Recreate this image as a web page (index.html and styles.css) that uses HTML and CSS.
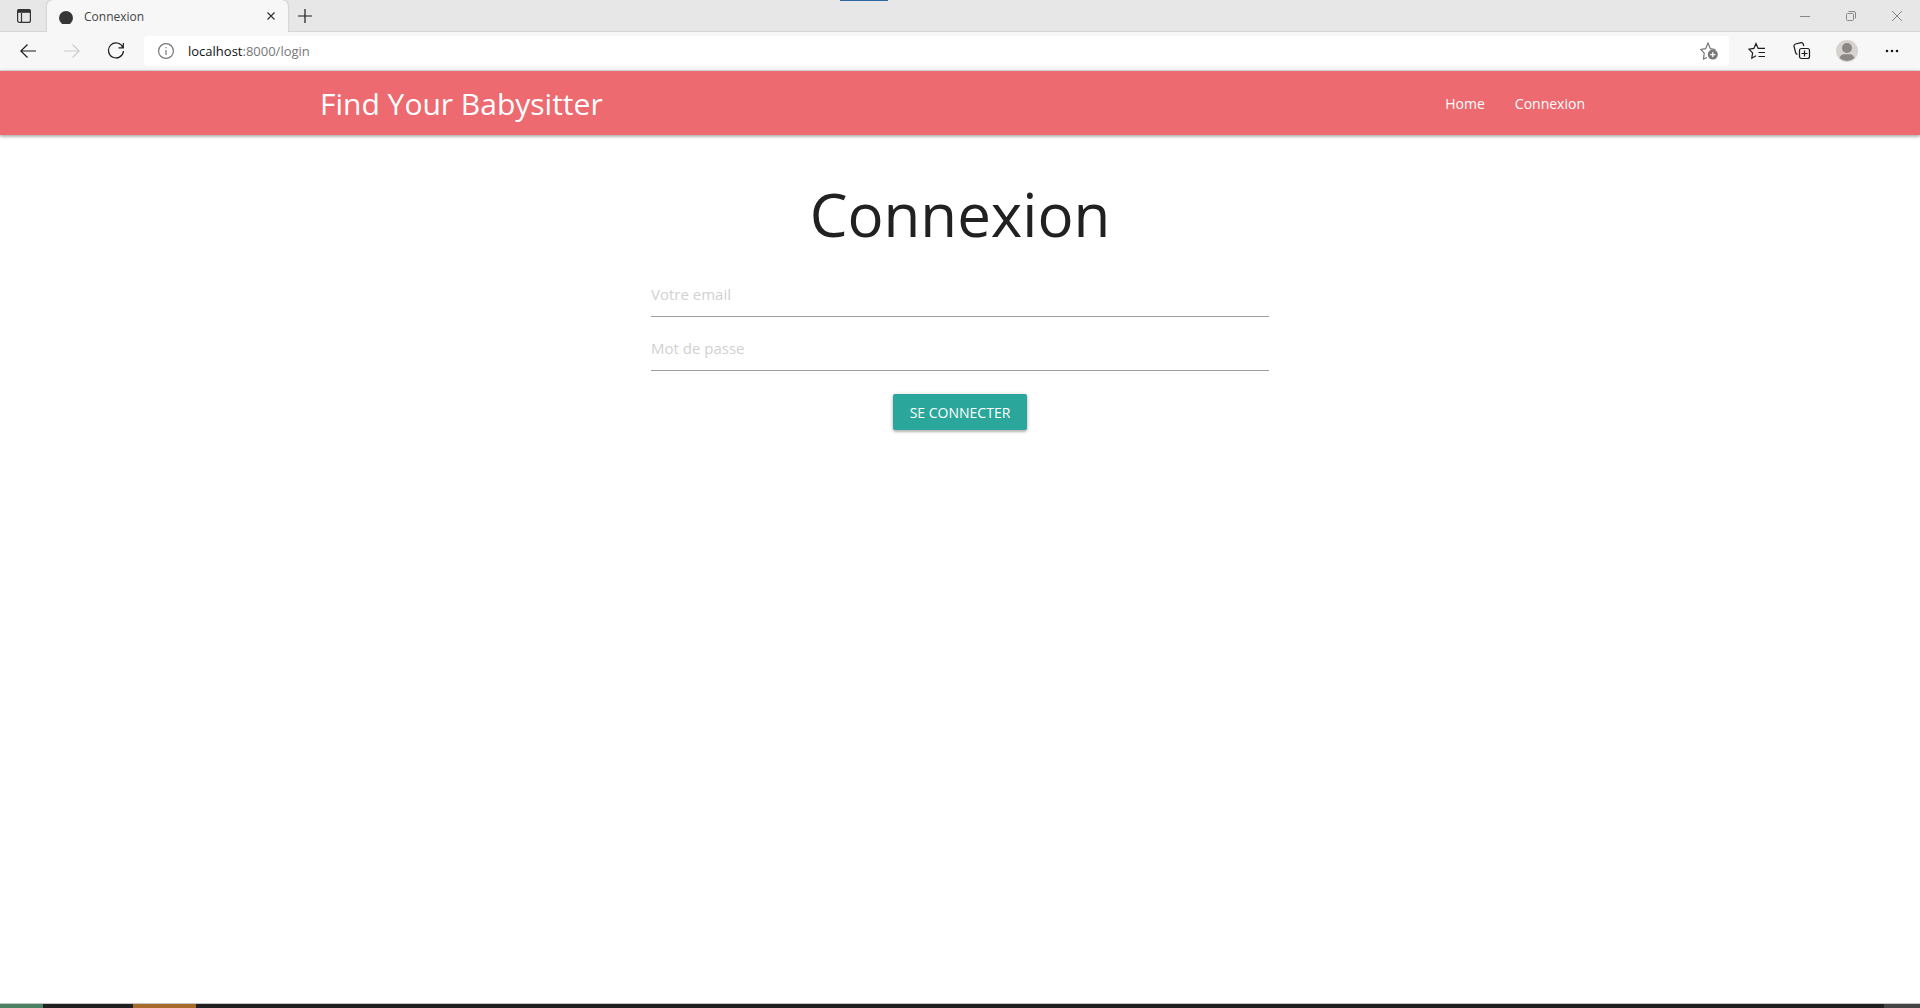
FILE: index.html
```html
<!DOCTYPE html>
<html lang="fr">
<head>
<meta charset="utf-8">
<meta name="viewport" content="width=device-width, initial-scale=1">
<title>Connexion</title>
<link rel="stylesheet" href="styles.css">
</head>
<body>
<div class="tab-strip">
  <button class="icon-button tab-actions" aria-label="Tab actions"><svg width="14" height="14" viewBox="0 0 14 14"><rect x=".6" y=".6" width="12.8" height="12.8" rx="2"/><path d="M.6 3V2.400Q.6.6 2.400.6h9.200q1.800 0 1.800 1.800V3.200H.6z" fill="currentColor"/><path d="M4.500 4v9"/></svg></button>
  <div class="tab">
    <svg class="favicon" width="14" height="14" viewBox="0 0 14 14"><path d="M3 13Q0 10.600 0 7a7 7 0 0 1 14 0q0 3.600-3 6z"/></svg>
    <span class="tab-title">Connexion</span>
    <button class="icon-button tab-close" aria-label="Close tab"><svg width="8" height="8" viewBox="0 0 8 8"><path d="m.5.5 7 7m0-7-7 7"/></svg></button>
  </div>
  <button class="icon-button new-tab" aria-label="New tab"><svg width="14" height="14" viewBox="0 0 14 14"><path d="M7 0v14M0 7h14"/></svg></button>
  <div class="window-controls">
    <button class="icon-button" aria-label="Minimize"><svg width="10" height="10" viewBox="0 0 10 10"><path d="M0 5.500h10"/></svg></button>
    <button class="icon-button" aria-label="Restore"><svg width="10" height="10" viewBox="0 0 10 10"><rect x=".5" y="2.500" width="7" height="7" rx="1"/><path d="M2.500.5H8Q9.500.5 9.500 2v5.500"/></svg></button>
    <button class="icon-button" aria-label="Close window"><svg width="10" height="10" viewBox="0 0 10 10"><path d="m0 0 10 10M10 0 0 10"/></svg></button>
  </div>
  <span class="drag-handle"></span>
</div>
<div class="toolbar">
  <div class="navigation">
    <button class="icon-button" aria-label="Back"><svg width="16" height="14" viewBox="0 0 16 14"><path d="M7.500.5.8 7l6.700 6.500M.8 7H16"/></svg></button>
    <button class="icon-button disabled" aria-label="Forward" disabled><svg width="16" height="14" viewBox="0 0 16 14"><path d="M8.500.5 15.200 7l-6.700 6.500M15.200 7H0"/></svg></button>
    <button class="icon-button" aria-label="Refresh"><svg width="18" height="18" viewBox="0 0 18 18"><path d="M15.800 5.200A7.500 7.500 0 1 0 16.500 9M16.300 1v4.800h-4.800"/></svg></button>
  </div>
  <div class="address">
    <svg class="info" width="16" height="16" viewBox="0 0 16 16"><circle cx="8" cy="8" r="7.400"/><path d="M8 7v5M8 4v1.300"/></svg>
    <span class="url">localhost<span class="path">:8000/login</span></span>
    <button class="icon-button favorite" aria-label="Add to favorites"><svg width="18" height="18" viewBox="0 0 18 18"><path d="m7 15.500-3.500 1.500.7-5.800L.8 7.500l4.800-.8L8 1l2.400 5.700 5 .8"/><circle cx="12.800" cy="12.600" r="4.400" fill="currentColor"/><path d="M12.800 10v5.200M10.200 12.600h5.200" stroke="#fff"/></svg></button>
  </div>
  <div class="browser-actions">
    <button class="icon-button" aria-label="Favorites"><svg width="18" height="18" viewBox="0 0 18 18"><path d="m8 13.800-4.200 2.400.8-5.300L1 7.200l4.900-.8L8 1.500l2.200 4.900H17M10.500 10.500H17M10.500 14.500H17"/></svg></button>
    <button class="icon-button" aria-label="Collections"><svg width="18" height="18" viewBox="0 0 18 18"><rect x="6.500" y="6.500" width="10" height="10" rx="2"/><path d="M11.500 8.500v6M8.500 11.500h6M4.500 12.500Q3 12 2.600 10.500L1 4.200Q.8 2.500 2.500 2L8 .7q1.700-.2 2.200 1.300l.6 2"/></svg></button>
    <button class="icon-button" aria-label="Profile"><svg width="22" height="22" viewBox="0 0 22 22" class="avatar"><circle cx="11" cy="11" r="11" fill="#d5d2cf"/><circle cx="11" cy="8" r="5" fill="#8b8785"/><path d="M3.500 18Q5 14.200 8 14.200h6q3 0 4.500 3.800a11 11 0 0 1-15 0z" fill="#8b8785"/></svg></button>
    <button class="icon-button" aria-label="Settings and more"><svg width="14" height="4" viewBox="0 0 14 4" class="dots"><circle cx="2" cy="2" r="1.300"/><circle cx="7" cy="2" r="1.300"/><circle cx="12" cy="2" r="1.300"/></svg></button>
  </div>
</div>
<header class="site-header">
  <nav class="container site-nav">
    <a class="brand" href="#">Find Your Babysitter</a>
    <div class="links"><a href="#">Home</a><a href="#">Connexion</a></div>
  </nav>
</header>
<main class="container">
  <h1>Connexion</h1>
  <form class="login-form">
    <input type="email" name="email" aria-label="Votre email" placeholder="Votre email">
    <input type="password" name="password" aria-label="Mot de passe" placeholder="Mot de passe">
    <button class="submit" type="submit">SE CONNECTER</button>
  </form>
</main>
<footer class="taskbar"><span class="start"></span><span class="active-app"></span><span class="show-desktop"></span></footer>
</body>
</html>
```
FILE: styles.css
```css
* { box-sizing: border-box; }

body {
  display: flex;
  flex-direction: column;
  min-height: 100vh;
  margin: 0;
  background: #fff;
  color: #212121;
  font-family: "Open Sans", "Noto Sans", sans-serif;
  font-size: 14px;
}

a { color: inherit; text-decoration: none; }

svg {
  display: block;
  flex: none;
  fill: none;
  stroke: currentColor;
  stroke-width: 1.2;
}

.icon-button {
  display: flex;
  align-items: center;
  justify-content: center;
  padding: 0;
  border: 0;
  background: none;
  color: #1b1b1b;
}

/* Browser chrome */
.tab-strip {
  position: relative;
  display: flex;
  height: 32px;
  background: #e7e7e7;
  box-shadow: inset 0 -1px #d6d6d6;
}

.tab-actions { width: 47px; color: #333; }

.tab {
  display: flex;
  align-items: center;
  width: 241px;
  padding: 0 9px 0 12px;
  border-radius: 6px 6px 0 0;
  background: #f7f7f7;
  box-shadow: 0 0 2px #aaa;
  clip-path: inset(0 -2px);
}

.favicon { fill: #363636; stroke: none; margin-top: 4px; }
.tab-title { margin-left: 11px; color: #444; font-size: 12px; }
.tab-close { width: 16px; height: 16px; margin-left: auto; color: #333; }
.new-tab { width: 34px; }
.window-controls { display: flex; margin-left: auto; }
.window-controls .icon-button { width: 46px; color: #888; }
.window-controls svg { stroke-width: 1; }

.drag-handle {
  position: absolute;
  top: 0;
  left: 50%;
  width: 48px;
  height: 1px;
  margin-left: -120px;
  background: #2869a3;
}

.toolbar {
  display: flex;
  align-items: center;
  height: 39px;
  padding: 0 6px;
  border-bottom: 1px solid #ddd;
  background: #f7f7f7;
}

.navigation, .browser-actions { display: flex; }
.navigation .icon-button { width: 44px; height: 32px; }
.navigation .disabled { color: #ccc; }

.address {
  display: flex;
  flex: 1;
  align-items: center;
  height: 30px;
  margin-left: 6px;
  padding: 0 11px 0 14px;
  border-radius: 4px;
  background: #fff;
}

.info { color: #777; }
.url { margin-left: 14px; color: #111; font-size: 13px; }
.path { color: #777; }
.favorite { margin-left: auto; color: #777; }
.browser-actions { margin-left: 5px; }
.browser-actions .icon-button { width: 45px; height: 32px; }
.avatar { stroke: none; }
.dots { fill: currentColor; stroke: none; }

/* Site */
.container {
  width: 70%;
  max-width: 1280px;
  margin: 0 auto;
}

.site-header {
  background: #ed6a70;
  color: #fff;
  box-shadow: 0 2px 2px rgba(0, 0, 0, .14), 0 1px 4px rgba(0, 0, 0, .25);
}

.site-nav {
  display: flex;
  align-items: center;
  justify-content: space-between;
  height: 64px;
  padding-top: 2px;
}

.brand { font-size: 30px; line-height: 62px; }
.links { display: flex; line-height: 62px; }
.links a { padding: 0 15px; }

main { flex: 1; }

h1 {
  margin: 42px 0 20px;
  font-size: 60px;
  font-weight: 400;
  line-height: 74px;
  text-align: center;
}

.login-form {
  display: flex;
  flex-direction: column;
  align-items: center;
  width: 50%;
  margin: 0 auto;
  padding: 0 11px;
}

.login-form input {
  width: 100%;
  height: 46px;
  margin-bottom: 8px;
  padding: 0;
  border: 0;
  border-bottom: 1px solid #9e9e9e;
  outline: 0;
  background: transparent;
  color: inherit;
  font-family: inherit;
  font-size: 15px;
}

.login-form input::placeholder { color: #d1d1d1; opacity: 1; }

.submit {
  height: 36px;
  margin-top: 15px;
  padding: 0 17px;
  border: 0;
  border-radius: 2px;
  background: #2ba69a;
  color: #fff;
  font-family: inherit;
  font-size: 14px;
  box-shadow: 0 2px 2px rgba(0, 0, 0, .14), 0 1px 4px rgba(0, 0, 0, .25);
}

/* Desktop taskbar edge */
.taskbar {
  display: flex;
  height: 5px;
  border-top: 1px solid #c4c4c4;
  background: #202020;
}

.start { width: 43px; background: #4b8262; }
.active-app { width: 63px; margin-left: 90px; background: #a66a2a; }
.show-desktop { width: 36px; margin-left: auto; background: #444; }
```
